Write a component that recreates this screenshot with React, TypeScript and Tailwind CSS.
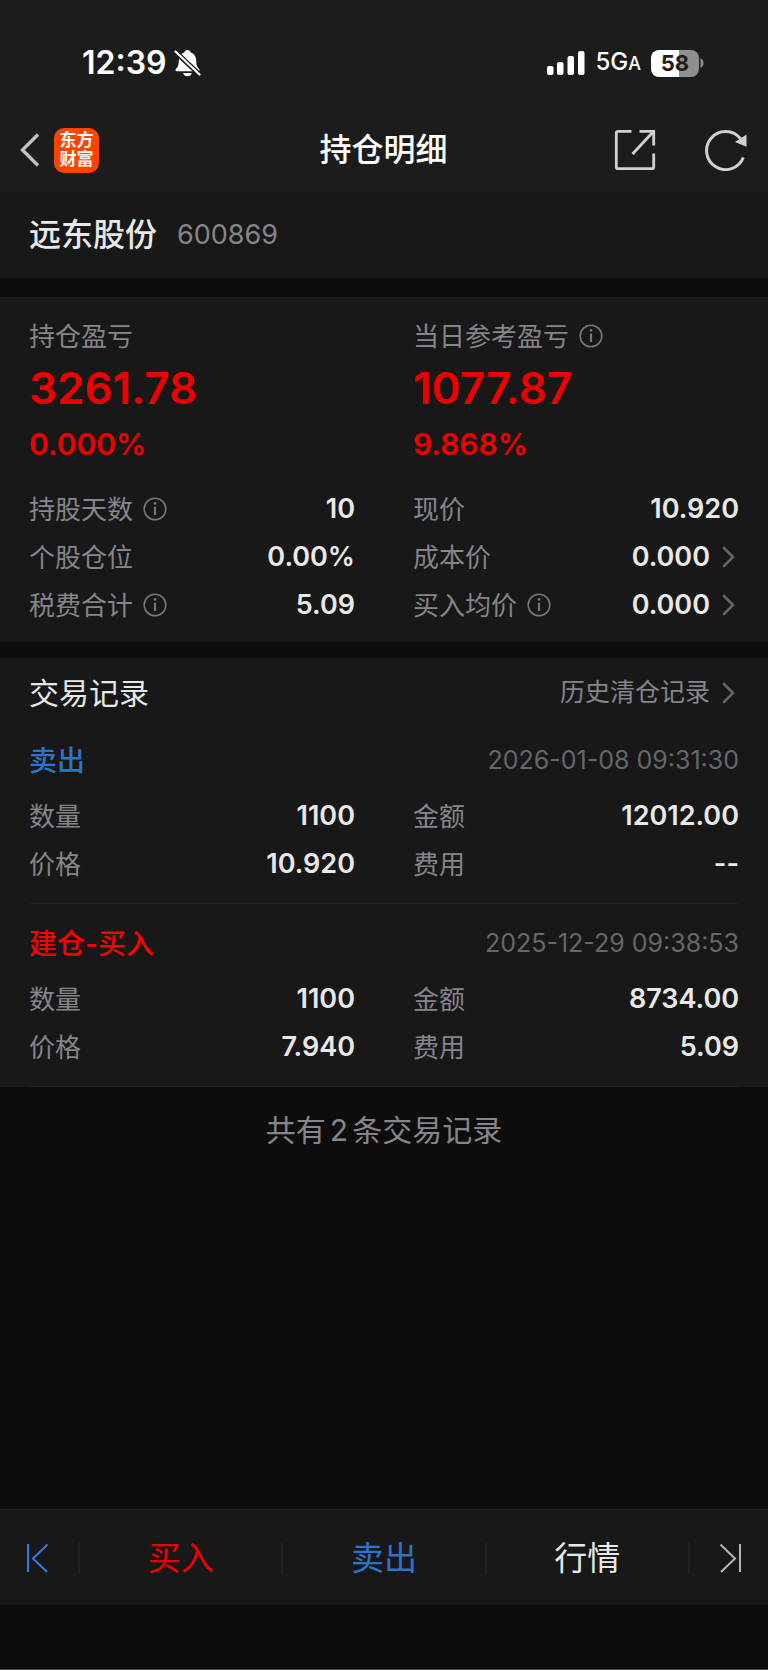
import type { ReactNode } from "react"

type Item = {
  label: string
  value: string
  info?: boolean
  link?: boolean
}

type TradeRecord = {
  title: string
  color: string
  time: string
  items: Item[]
}

const holding: Item[] = [
  { label: "持股天数", value: "10", info: true },
  { label: "现价", value: "10.920" },
  { label: "个股仓位", value: "0.00%" },
  { label: "成本价", value: "0.000", link: true },
  { label: "税费合计", value: "5.09", info: true },
  { label: "买入均价", value: "0.000", info: true, link: true },
]

const records: TradeRecord[] = [
  {
    title: "卖出",
    color: "text-[#2b74cc]",
    time: "2026-01-08 09:31:30",
    items: [
      { label: "数量", value: "1100" },
      { label: "金额", value: "12012.00" },
      { label: "价格", value: "10.920" },
      { label: "费用", value: "--" },
    ],
  },
  {
    title: "建仓-买入",
    color: "text-[#fa0000]",
    time: "2025-12-29 09:38:53",
    items: [
      { label: "数量", value: "1100" },
      { label: "金额", value: "8734.00" },
      { label: "价格", value: "7.940" },
      { label: "费用", value: "5.09" },
    ],
  },
]

function InfoButton({ label }: { label: string }) {
  return (
    <button type="button" aria-label={label + "说明"} className="ml-[10px] text-[#77777b]">
      <svg width="24" height="24" viewBox="0 0 24 24" fill="none" stroke="currentColor">
        <circle cx="12" cy="12" r="10.8" strokeWidth="1.6" />
        <path d="M12 9.6V18" strokeWidth="2.2" />
        <circle cx="12" cy="6.4" r="1.4" fill="currentColor" stroke="none" />
      </svg>
    </button>
  )
}

function Chevron() {
  return (
    <svg width="17" height="22" viewBox="0 0 17 22" fill="none" stroke="#646466" strokeWidth="2.6" strokeLinecap="round">
      <path d="M2 2l9 9l-9 9" />
    </svg>
  )
}

function ItemGrid({ items }: { items: Item[] }) {
  return (
    <dl className="grid grid-cols-2">
      {items.map((item) => (
        <div key={item.label} className="flex h-12 items-center justify-between px-[29px]">
          <dt className="flex items-center text-[26px] text-[#85858b]">
            {item.label}
            {item.info && <InfoButton label={item.label} />}
          </dt>
          <dd className="text-[27px] leading-12 font-semibold text-[#e8e8e8]">
            {item.link ? (
              <button type="button" className="flex items-center gap-3">
                {item.value}
                <Chevron />
              </button>
            ) : (
              item.value
            )}
          </dd>
        </div>
      ))}
    </dl>
  )
}

function Profit({ label, amount, rate, info }: { label: string; amount: string; rate: string; info?: boolean }) {
  return (
    <div className="pl-[29px]">
      <h2 className="flex h-10 items-center text-[26px] text-[#85858b]">
        {label}
        {info && <InfoButton label={label} />}
      </h2>
      <p className="text-[44px] leading-16 font-semibold text-[#ee0000]">{amount}</p>
      <p className="text-[30px] leading-12 font-semibold text-[#ee0000]">{rate}</p>
    </div>
  )
}

function StatusBar() {
  return (
    <div className="flex h-[108px] items-center justify-between pt-[18px] pr-16 pl-[82px] text-white">
      <div className="flex items-center gap-[7px]">
        <span className="text-[32px] leading-9 font-semibold">12:39</span>
        <svg width="27" height="28" viewBox="0 0 27 28" fill="none">
          <path
            d="M13.500 1c1.500 0 2.700.9 3 2.200 3.600 1.100 5.600 4.200 5.700 8 .1 5 .9 6.900 2.900 8.800.8.800.4 2.300-.8 2.300H2.700c-1.200 0-1.600-1.500-.8-2.300 2-1.900 2.800-3.800 2.900-8.800.1-3.800 2.100-6.900 5.700-8C10.800 1.900 12 1 13.500 1z"
            fill="currentColor"
          />
          <path d="M9.200 24h8.600c-.5 2.100-2.200 3.300-4.300 3.300S9.700 26.100 9.200 24z" fill="currentColor" />
          <path d="M1 2.500L26 26" stroke="#1c1c1c" strokeWidth="5" />
          <path d="M1.500 2.500L25.500 25.500" stroke="currentColor" strokeWidth="2.2" strokeLinecap="round" />
        </svg>
      </div>
      <div className="flex items-center">
        <svg width="38" height="24" viewBox="0 0 38 24" fill="currentColor">
          <rect x="0" y="15" width="6.500" height="9" rx="2" />
          <rect x="10" y="11" width="6.500" height="13" rx="2" />
          <rect x="20.500" y="5" width="6.500" height="19" rx="2" />
          <rect x="31" y="0" width="6.500" height="24" rx="2" />
        </svg>
        <span className="ml-[10px] text-[24px] leading-8 font-medium">
          5G<span className="text-[18px]">A</span>
        </span>
        <span className="ml-[10px] flex h-[27px] w-12 items-center justify-center rounded-lg bg-linear-to-r from-white from-58% to-[#8e8e8e] to-58% text-[22px] font-bold text-[#1c1c1c]">
          58
        </span>
        <svg className="ml-px" width="4" height="10" viewBox="0 0 4 10" fill="#8e8e8e">
          <path d="M0.500 0C2.500 1 3.500 3 3.500 5S2.500 9 0.500 10z" />
        </svg>
      </div>
    </div>
  )
}

function NavBar() {
  return (
    <header className="grid h-[84px] grid-cols-[1fr_auto_1fr] items-center pr-[21px] pl-5">
      <div className="flex items-center gap-[14px]">
        <button type="button" aria-label="返回">
          <svg width="20" height="34" viewBox="0 0 20 34" fill="none" stroke="#c0c0c0" strokeWidth="3.400">
            <path d="M18 1.500L2.500 17l15.500 15.500" />
          </svg>
        </button>
        <a
          href="#"
          className="flex size-[45px] items-center justify-center rounded-[10px] bg-[#ff4400] text-center text-[17px] leading-[19px] font-bold text-white"
        >
          东方
          <br />
          财富
        </a>
      </div>
      <h1 className="text-[32px] font-medium text-white">持仓明细</h1>
      <div className="flex items-center justify-end gap-12">
        <button type="button" aria-label="分享">
          <svg width="42" height="42" viewBox="0 0 42 42" fill="none" stroke="#d0d0d0" strokeWidth="2.800">
            <path d="M17.500 2.300H4a1.700 1.700 0 0 0-1.700 1.700v34A1.700 1.700 0 0 0 4 39.700h34a1.700 1.700 0 0 0 1.700-1.700V24.500" />
            <path d="M25.500 2.300h14.200v14.200M39 3L18.500 25" />
          </svg>
        </button>
        <button type="button" aria-label="刷新">
          <svg width="43" height="42" viewBox="0 0 43 42" fill="none">
            <path d="M39.300 28.500A19 19 0 1 1 36.500 9.800" stroke="#d0d0d0" strokeWidth="3" />
            <path d="M42.500 5.500V17.800L31 13z" fill="#d0d0d0" />
          </svg>
        </button>
      </div>
    </header>
  )
}

function Tab({ children, color }: { children: ReactNode; color: string }) {
  return (
    <button type="button" className={"h-8 flex-1 border-r-2 border-[#212121] text-[33px] leading-8 " + color}>
      {children}
    </button>
  )
}

function BottomBar() {
  return (
    <nav className="mt-auto flex h-24 items-center border-t border-[#222222] bg-[#181818]">
      <button type="button" aria-label="上一只" className="flex h-8 w-20 items-center border-r-2 border-[#212121] pl-[26px]">
        <svg width="23" height="30" viewBox="0 0 23 30" fill="none" stroke="#2f7de0" strokeWidth="2">
          <path d="M2 1v28M21.500 1.500L7 15.500l14 13.500" />
        </svg>
      </button>
      <Tab color="text-[#ee0000]">买入</Tab>
      <Tab color="text-[#2b74cc]">卖出</Tab>
      <Tab color="text-[#e8e8e8]">行情</Tab>
      <button type="button" aria-label="下一只" className="flex h-8 w-[78px] items-center justify-end pr-[26px]">
        <svg width="23" height="30" viewBox="0 0 23 30" fill="none" stroke="#b4b4b4" strokeWidth="2">
          <path d="M21 1v28M1.500 1.500L16 15.500L2 29" />
        </svg>
      </button>
    </nav>
  )
}

function App() {
  return (
    <div className="flex min-h-screen flex-col border-b border-[#4a4a4a] bg-[#0d0d0d] pb-16 font-['Inter','Noto_Sans_CJK_SC',sans-serif]">
      <div className="bg-[#1c1c1c]">
        <StatusBar />
        <NavBar />
      </div>

      <section className="flex h-[86px] items-center gap-5 bg-[#181818] pl-[29px]">
        <h2 className="text-[32px] font-medium text-[#e8e8e8]">远东股份</h2>
        <span className="text-[27px] text-[#85858b]">600869</span>
      </section>

      <section className="mt-[19px] bg-[#181818] pt-[19px] pb-[13px]">
        <div className="mb-[17px] grid grid-cols-2">
          <Profit label="持仓盈亏" amount="3261.78" rate="0.000%" />
          <Profit label="当日参考盈亏" amount="1077.87" rate="9.868%" info />
        </div>
        <ItemGrid items={holding} />
      </section>

      <section className="mt-4 bg-[#181818]">
        <div className="flex h-[63px] items-center justify-between px-[29px] pt-[7px]">
          <h2 className="text-[30px] text-[#e8e8e8]">交易记录</h2>
          <a href="#" className="flex items-center gap-3 text-[25px] text-[#85858b]">
            历史清仓记录
            <Chevron />
          </a>
        </div>
        {records.map((record) => (
          <article key={record.time}>
            <div className="flex h-[71px] items-center justify-between px-[29px] pt-2">
              <h3 className={"text-[28px] font-medium " + record.color}>{record.title}</h3>
              <time className="text-[25px] text-[#66666a]">{record.time}</time>
            </div>
            <ItemGrid items={record.items} />
            <div className="mx-[29px] mt-[15px] border-b border-[#212121]"></div>
          </article>
        ))}
      </section>

      <p className="py-5 text-center text-[30px] leading-[46px] text-[#85858b]">
        共有<span className="mx-1">2</span>条交易记录
      </p>

      <BottomBar />
    </div>
  )
}

export default App
